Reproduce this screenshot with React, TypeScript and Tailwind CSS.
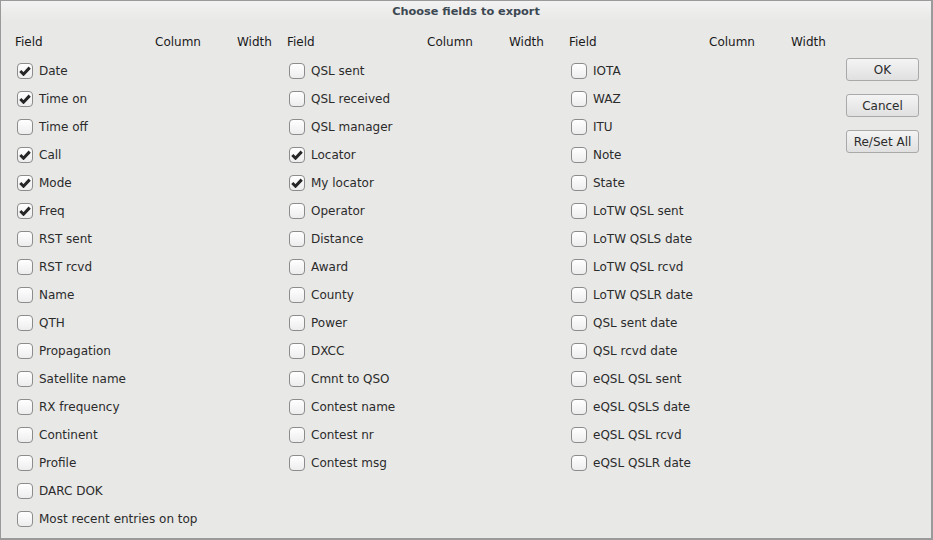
const col1: [string, boolean][] = [
  ["Date", true],
  ["Time on", true],
  ["Time off", false],
  ["Call", true],
  ["Mode", true],
  ["Freq", true],
  ["RST sent", false],
  ["RST rcvd", false],
  ["Name", false],
  ["QTH", false],
  ["Propagation", false],
  ["Satellite name", false],
  ["RX frequency", false],
  ["Continent", false],
  ["Profile", false],
  ["DARC DOK", false],
  ["Most recent entries on top", false],
];

const col2: [string, boolean][] = [
  ["QSL sent", false],
  ["QSL received", false],
  ["QSL manager", false],
  ["Locator", true],
  ["My locator", true],
  ["Operator", false],
  ["Distance", false],
  ["Award", false],
  ["County", false],
  ["Power", false],
  ["DXCC", false],
  ["Cmnt to QSO", false],
  ["Contest name", false],
  ["Contest nr", false],
  ["Contest msg", false],
];

const col3: [string, boolean][] = [
  ["IOTA", false],
  ["WAZ", false],
  ["ITU", false],
  ["Note", false],
  ["State", false],
  ["LoTW QSL sent", false],
  ["LoTW QSLS date", false],
  ["LoTW QSL rcvd", false],
  ["LoTW QSLR date", false],
  ["QSL sent date", false],
  ["QSL rcvd date", false],
  ["eQSL QSL sent", false],
  ["eQSL QSLS date", false],
  ["eQSL QSL rcvd", false],
  ["eQSL QSLR date", false],
];

function Check({ on }: { on: boolean }) {
  return (
    <span className="w-[16px] h-[16px] rounded-[4px] border border-[#8c8c8c] bg-gradient-to-b from-[#ffffff] to-[#ededed] flex items-center justify-center shrink-0">
      {on && (
        <svg width="12" height="10" viewBox="0 0 12 10">
          <path d="M1.3 5 L4.5 8.2 L10.7 1.6" fill="none" stroke="#262626" strokeWidth="3" strokeLinejoin="miter" />
        </svg>
      )}
    </span>
  );
}

function Column({ items, w }: { items: [string, boolean][]; w: string }) {
  return (
    <div className={`${w} shrink-0`}>
      <div className="h-[18px] flex items-center text-[12px] text-[#1a1a1a]">
        <span className="w-[140px]">Field</span>
        <span className="w-[82px]">Column</span>
        <span>Width</span>
      </div>
      <div className="pt-[6px]">
        {items.map(([label, on]) => (
          <div key={label} className="h-[28px] flex items-center pl-[2px] gap-[6px]">
            <Check on={on} />
            <span className="text-[12px] text-[#2b2b2b]">{label}</span>
          </div>
        ))}
      </div>
    </div>
  );
}

function Btn({ children }: { children: string }) {
  return (
    <div className="w-[73px] h-[23px] rounded-[3px] border border-[#a9a9a9] bg-gradient-to-b from-[#f4f4f4] to-[#e0e0e0] flex items-center justify-center text-[12px] text-[#2b2b2b]">
      {children}
    </div>
  );
}

export default function App() {
  return (
    <div className="w-[933px] h-[540px] bg-[#e8e8e7] border border-[#9a9a9a] border-r-2 border-b-2 flex flex-col font-['DejaVu_Sans',sans-serif]">
      <div className="h-[21px] bg-gradient-to-b from-[#f2f2f2] to-[#e8e8e7] flex items-center justify-center text-[11.3px] font-bold text-[#3c4852] pt-[1px]">
        Choose fields to export
      </div>
      <div className="flex pl-[14px] pt-[11px]">
        <Column items={col1} w="w-[272px]" />
        <Column items={col2} w="w-[282px]" />
        <Column items={col3} w="w-[277px]" />
        <div className="flex flex-col gap-[13px] pt-[25px]">
          <Btn>OK</Btn>
          <Btn>Cancel</Btn>
          <Btn>Re/Set All</Btn>
        </div>
      </div>
    </div>
  );
}
